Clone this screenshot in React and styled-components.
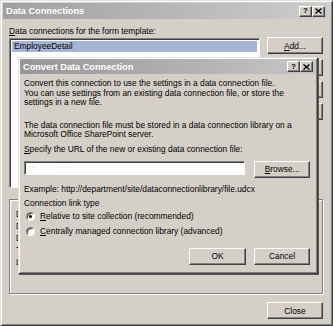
import React from 'react';
import styled, { createGlobalStyle } from 'styled-components';

const Global = createGlobalStyle`
  html, body {
    margin: 0;
    padding: 0;
    background: #d4d0c8;
  }
  body {
    font-family: "Liberation Sans", Arial, sans-serif;
    font-size: 8.4px;
    color: #000;
  }
`;

const Window = styled.div`
  position: relative;
  box-sizing: border-box;
  width: 333px;
  height: 326px;
  padding: 2px;
  background: #d4d0c8;
  border: 1px solid;
  border-color: #e4e1dc #404040 #404040 #e4e1dc;
  box-shadow: inset 1px 1px #fff, inset -1px -1px #808080;
  display: flex;
  flex-direction: column;
`;

const TitleBar = styled.div`
  display: flex;
  align-items: center;
  height: ${(p) => p.$h || 16}px;
  padding: 0 ${(p) => p.$pr || 5}px 0 3px;
  background: linear-gradient(90deg, ${(p) => p.$from || '#a0a0a0'}, ${(p) => p.$to || '#cdcdcd'});
  flex-shrink: 0;
`;

const Title = styled.span`
  flex: 1;
  color: #fff;
  font-weight: bold;
  font-size: 9.2px;
`;

const Caps = styled.div`
  display: flex;
`;

const CapButton = styled.span`
  box-sizing: border-box;
  width: 13px;
  height: 11px;
  display: flex;
  align-items: center;
  justify-content: center;
  overflow: hidden;
  background: #d4d0c8;
  border: 1px solid;
  border-color: #fff #404040 #404040 #fff;
  box-shadow: inset -1px -1px #808080;
  font-weight: bold;
  font-size: 8px;
  line-height: 1;
`;

const CloseGlyph = () => (
  <svg width="7" height="6" viewBox="0 0 7 6">
    <path d="M0.5 0.5 L6.5 5.5 M6.5 0.5 L0.5 5.5" stroke="#000" strokeWidth="1.4" />
  </svg>
);

const Body = styled.div`
  flex: 1;
  display: flex;
  flex-direction: column;
  padding: 7px 7px 0 6px;
`;

const Label = styled.div`
  line-height: 10px;
  white-space: nowrap;
`;

/* text whose first letter is the access key */
const AccessText = styled.span`
  display: inline-block;
  white-space: nowrap;
  &::first-letter {
    text-decoration: underline;
  }
`;

const Main = styled.div`
  display: flex;
  align-items: flex-start;
  margin-top: 1px;
`;

const Sunken = styled.div`
  box-sizing: border-box;
  background: #fff;
  border: 1px solid;
  border-color: #808080 #fff #fff #808080;
  box-shadow: inset 1px 1px #404040;
`;

const ListBox = styled(Sunken)`
  width: 251px;
  height: 150px;
  margin-top: 1px;
  padding: 2px;
`;

const ListItem = styled.div`
  height: 11px;
  line-height: 11px;
  padding-left: 2px;
  background: ${(p) => (p.$selected ? '#a7b4d6' : 'transparent')};
`;

const SideButtons = styled.div`
  margin-left: auto;
  display: flex;
  flex-direction: column;
  gap: 5px;
`;

const Button = styled.button`
  box-sizing: border-box;
  width: ${(p) => p.$w || 56}px;
  height: 17px;
  padding: 0;
  font: inherit;
  color: #000;
  background: #d4d0c8;
  border: 1px solid;
  border-color: #fff #404040 #404040 #fff;
  box-shadow: inset -1px -1px #808080;
  display: flex;
  align-items: center;
  justify-content: center;
`;

const Details = styled.fieldset`
  box-sizing: border-box;
  height: 100px;
  margin: 6px 0 0;
  padding: 4px 6px;
  border: 1px solid #808080;
  box-shadow: inset 1px 1px #fff, 1px 1px #fff;
  legend {
    padding: 0 1px;
    margin-left: 5px;
  }
`;

const DetailLine = styled.div`
  line-height: 12px;
  white-space: nowrap;
`;

const Footer = styled.div`
  display: flex;
  justify-content: flex-end;
  margin-top: 8px;
`;

const Dialog = styled.div`
  position: absolute;
  left: 17px;
  top: 56px;
  box-sizing: border-box;
  width: 300px;
  height: 217px;
  padding: 1px;
  background: #d4d0c8;
  border: 1px solid;
  border-color: #e4e1dc #404040 #404040 #e4e1dc;
  box-shadow: inset 1px 1px #fff, inset -1px -1px #808080, 1px 1px 0 #555;
  display: flex;
  flex-direction: column;
`;

const DialogBody = styled.div`
  padding: 5px 6px 0 4px;
  display: flex;
  flex-direction: column;
`;

const Para = styled.p`
  margin: ${(p) => p.$mt || 0}px 0 0;
  line-height: 9.6px;
`;

const Row = styled.div`
  display: flex;
  align-items: flex-start;
  justify-content: ${(p) => p.$justify || 'flex-start'};
  gap: ${(p) => p.$gap || 0}px;
  margin-top: ${(p) => p.$mt || 0}px;
`;

const Input = styled(Sunken)`
  width: 222px;
  height: 14px;
  padding: 2px 4px;
  color: #c8c8c8;
  font-size: 7px;
  line-height: 9px;
  white-space: nowrap;
  overflow: hidden;
`;

const RadioRow = styled.label`
  display: flex;
  align-items: center;
  gap: 5px;
  height: 15px;
  padding-left: 2px;
`;

const RadioDot = styled.span`
  box-sizing: border-box;
  width: 9px;
  height: 9px;
  border-radius: 50%;
  background: #fff;
  border: 1px solid;
  border-color: #808080 #fff #fff #808080;
  box-shadow: inset 1px 1px #404040;
  display: flex;
  align-items: center;
  justify-content: center;
  &::after {
    content: '';
    width: 3px;
    height: 3px;
    border-radius: 50%;
    background: ${(p) => (p.$checked ? '#000' : 'transparent')};
  }
`;

export default function App() {
  return (
    <>
      <Global />
      <Window>
        <TitleBar>
          <Title>Data Connections</Title>
          <Caps>
            <CapButton>?</CapButton>
            <CapButton>
              <CloseGlyph />
            </CapButton>
          </Caps>
        </TitleBar>
        <Body>
          <Label>
            <AccessText>Data connections for the form template:</AccessText>
          </Label>
          <Main>
            <ListBox>
              <ListItem $selected>EmployeeDetail</ListItem>
            </ListBox>
            <SideButtons>
              <Button>
                <AccessText>Add...</AccessText>
              </Button>
              <Button>Modify...</Button>
              <Button>Remove</Button>
              <Button>Convert...</Button>
            </SideButtons>
          </Main>
          <Details>
            <legend>Details</legend>
            <DetailLine>Data connection type: receive data</DetailLine>
            <DetailLine>Data source: Microsoft SQL Server</DetailLine>
            <DetailLine>Database: Employees</DetailLine>
            <DetailLine>Table: EmployeeDetail</DetailLine>
            <DetailLine>Load on open: yes</DetailLine>
          </Details>
          <Footer>
            <Button>Close</Button>
          </Footer>
        </Body>

        <Dialog>
          <TitleBar $h={15} $pr={3} $from="#979797" $to="#c6c6c6">
            <Title>Convert Data Connection</Title>
            <Caps>
              <CapButton>?</CapButton>
              <CapButton>
                <CloseGlyph />
              </CapButton>
            </Caps>
          </TitleBar>
          <DialogBody>
            <Para>
              Convert this connection to use the settings in a data connection file.
              <br />
              You can use settings from an existing data connection file, or store the
              <br />
              settings in a new file.
            </Para>
            <Para $mt={13}>
              The data connection file must be stored in a data connection library on a
              <br />
              Microsoft Office SharePoint server.
            </Para>
            <Para $mt={5}>
              <AccessText>Specify the URL of the new or existing data connection file:</AccessText>
            </Para>
            <Row $mt={6} $gap={9}>
              <Input>'  ''  ·          ·  · · · ' ' '  '</Input>
              <Button>
                <AccessText>Browse...</AccessText>
              </Button>
            </Row>
            <Para $mt={7}>Example: http://department/site/dataconnectionlibrary/file.udcx</Para>
            <Para $mt={5}>Connection link type</Para>
            <RadioRow>
              <RadioDot $checked />
              <AccessText>Relative to site collection (recommended)</AccessText>
            </RadioRow>
            <RadioRow>
              <RadioDot />
              <AccessText>Centrally managed connection library (advanced)</AccessText>
            </RadioRow>
            <Row $mt={9} $gap={8} $justify="flex-end">
              <Button $w={57}>OK</Button>
              <Button>Cancel</Button>
            </Row>
          </DialogBody>
        </Dialog>
      </Window>
    </>
  );
}
